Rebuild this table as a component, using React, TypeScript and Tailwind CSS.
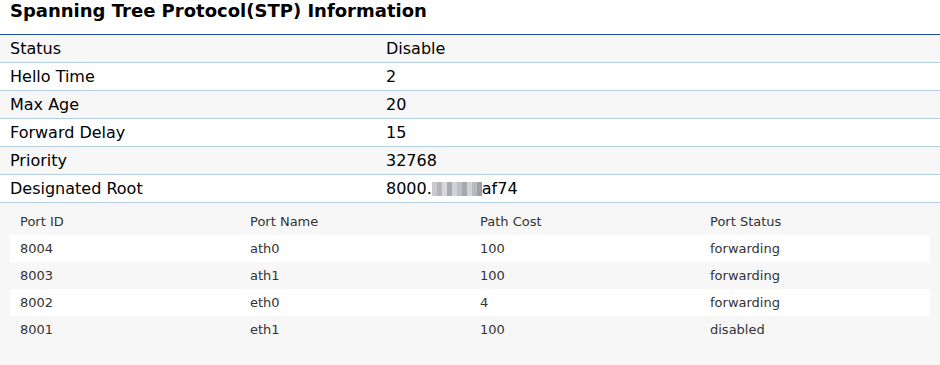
const info = [
  { label: "Status", value: "Disable" },
  { label: "Hello Time", value: "2" },
  { label: "Max Age", value: "20" },
  { label: "Forward Delay", value: "15" },
  { label: "Priority", value: "32768" },
];

const ports = [
  { id: "8004", name: "ath0", cost: "100", status: "forwarding" },
  { id: "8003", name: "ath1", cost: "100", status: "forwarding" },
  { id: "8002", name: "eth0", cost: "4", status: "forwarding" },
  { id: "8001", name: "eth1", cost: "100", status: "disabled" },
];

// blurred mac address chunk
const blur = ["#c9c9cf", "#b4b6bb", "#d6d8dc", "#a9abb0", "#cfd2d6", "#bcbfc4", "#a6a8ad", "#d0d3d6", "#b7b9be", "#9da0a5"];

export default function App() {
  return (
    <div className="h-[365px] w-[940px] overflow-hidden bg-white font-['DejaVu_Sans',Verdana,sans-serif] text-black">
      <h1 className="h-[34px] pl-[10px] text-[18px] font-bold leading-[22px]">
        Spanning Tree Protocol(STP) Information
      </h1>

      <div className="border-t border-[#1f4d9e]">
        {info.map((row, i) => (
          <div
            key={row.label}
            className={`flex h-[28px] items-center border-b border-[#b3cde0] text-[16px] ${
              i % 2 === 0 ? "bg-[#f7f7f7]" : "bg-white"
            }`}
          >
            <div className="w-[386px] pl-[10px]">{row.label}</div>
            <div>{row.value}</div>
          </div>
        ))}
        <div className="flex h-[28px] items-center border-b border-[#b3cde0] bg-white text-[16px]">
          <div className="w-[386px] pl-[10px]">Designated Root</div>
          <div className="flex items-center">
            8000.
            <span className="flex h-[14px]">
              {blur.map((c, i) => (
                <span key={i} className="h-full w-[5px]" style={{ background: c }} />
              ))}
            </span>
            af74
          </div>
        </div>
      </div>

      <div className="bg-[#f7f7f7] px-[10px] pt-[5px] pb-[30px] text-[13px] text-[#333]">
        <div className="grid h-[27px] grid-cols-4 items-center">
          <div className="pl-[10px]">Port ID</div>
          <div className="pl-[10px]">Port Name</div>
          <div className="pl-[10px]">Path Cost</div>
          <div className="pl-[10px]">Port Status</div>
        </div>
        {ports.map((p, i) => (
          <div
            key={p.id}
            className={`grid h-[27px] grid-cols-4 items-center ${i % 2 === 0 ? "bg-white" : ""}`}
          >
            <div className="pl-[10px]">{p.id}</div>
            <div className="pl-[10px]">{p.name}</div>
            <div className="pl-[10px]">{p.cost}</div>
            <div className="pl-[10px]">{p.status}</div>
          </div>
        ))}
      </div>
    </div>
  );
}
